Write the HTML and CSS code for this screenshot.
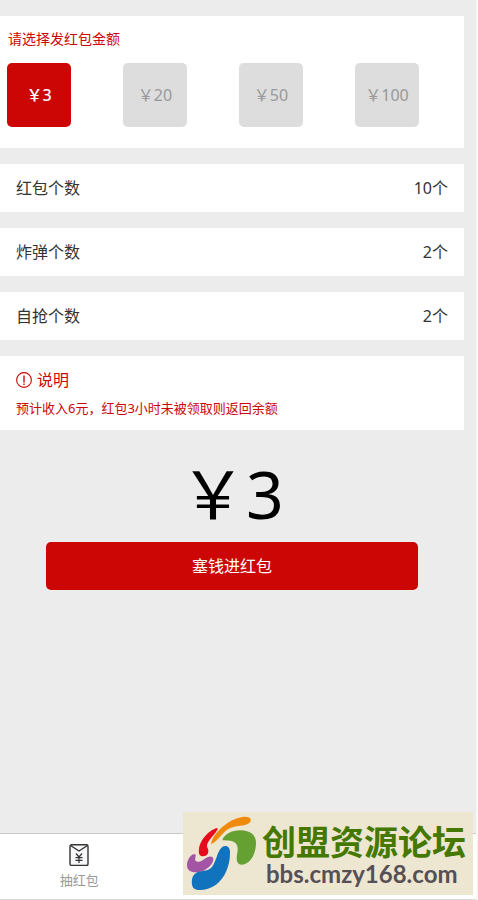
FILE: index.html
```html
<!DOCTYPE html>
<html lang="zh-CN">

<head>
    <meta charset="utf-8">
    <title>发红包</title>
    <meta name="viewport" content="width=device-width, initial-scale=1">
    <link rel="stylesheet" href="styles.css">
</head>

<body>

  <main class="content">
    <section class="card amount">
      <h1 class="amount-title">请选择发红包金额</h1>
      <div class="amount-list">
        <button type="button" class="amount-item active">￥3</button>
        <button type="button" class="amount-item">￥20</button>
        <button type="button" class="amount-item">￥50</button>
        <button type="button" class="amount-item">￥100</button>
      </div>
    </section>

    <div class="card row"><span>红包个数</span><span>10个</span></div>
    <div class="card row"><span>炸弹个数</span><span>2个</span></div>
    <div class="card row"><span>自抢个数</span><span>2个</span></div>

    <section class="card notice">
      <h2 class="notice-title">
        <svg class="notice-icon" viewBox="0 0 16 16" fill="none" stroke="currentColor">
          <circle cx="8" cy="8" r="7.4" stroke-width="1.1"/>
          <path d="M8 3.500v7M8 11.500v1.500" stroke-width="1.4"/>
        </svg>
        说明
      </h2>
      <p class="notice-text">预计收入6元，红包3小时未被领取则返回余额</p>
    </section>

    <div class="total">￥3</div>
    <button type="button" class="submit">塞钱进红包</button>
  </main>

  <nav class="tabbar">
    <a class="tab" href="#">
      <svg class="tab-icon" viewBox="0 0 20 22" fill="none" stroke="#333" stroke-width="1.4">
        <rect x="1" y="0.8" width="18" height="20.6" rx="1.5" fill="#f8f8fa"/>
        <path d="M1.500 1.500L10 7l8.500-5.500" stroke-linejoin="round"/>
        <path d="M7 9.500l3 3.500 3-3.500M10 13v6M6.500 13.700h7M6.500 16.300h7" stroke-width="1.2"/>
      </svg>
      <span>抽红包</span>
    </a>
  </nav>

  <!-- forum banner over the tab bar -->
  <div class="banner">
    <svg class="banner-logo" viewBox="0 0 228 249">
      <path fill="#e60b1c" d="M103 48C80 52 50 84 48 112c-2 14 2 21 12 21 12 0 17-9 16-18-1-6-5-9-4-15 3-16 24-32 32-48z"/>
      <path fill="#ef8a0c" d="M85 96C84 74 124 32 162 19c20-7 36-6 40 1 4 8-3 15-14 18-14 4-28 2-46 10-24 10-36 40-57 48z"/>
      <path fill="#65a033" d="M118 85c5-18 28-30 54-30 30 0 49 14 47 42-2 34-20 61-43 61-20-1-15-26-12-42 2-24-12-32-46-31z"/>
      <path fill="#a454a4" d="M32 127c-12 3-20 20-20 33 0 14 10 21 25 21 24 0 51-18 54-38 1-10-9-12-18-7-10 5-18 15-29 13-13-2-5-12-6-20 0-2-3-3-6-2z"/>
      <path fill="#1172bd" d="M127 102c-12 0-19 14-25 30-8 22-14 38-28 42-16 5-30 2-41 14-9 10-9 36 1 42 12 8 44 3 65-12 26-18 43-58 42-97 0-12-5-19-14-19z"/>
    </svg>
    <div class="banner-text">
      <div class="banner-name">创盟资源论坛</div>
      <div class="banner-url">bbs.cmzy168.com</div>
    </div>
  </div>

</body>

</html>
```
FILE: styles.css
```css
* {
  box-sizing: border-box;
}

body {
  margin: 0;
  min-height: 100vh;
  display: flex;
  flex-direction: column;
  background-color: #ececec;
  border-right: 2px solid #f7f7f7;
  font-family: "Noto Sans", "Noto Sans CJK SC", sans-serif;
  font-size: 16px;
  line-height: 24px;
  color: #333;
}

h1, h2, p {
  margin: 0;
  font-weight: 400;
}

button {
  border: none;
  border-radius: 5px;
  padding: 0;
  font: inherit;
  cursor: pointer;
}

.content {
  flex: 1;
  display: flex;
  flex-direction: column;
  gap: 16px;
  padding: 16px 12px 0 0;
}

.card {
  background-color: #fff;
}

.amount {
  padding: 11px 0 21px;
}

.amount-title {
  padding-left: 8px;
  margin-bottom: 12px;
  font-size: 14px;
  color: #cc0605;
}

.amount-list {
  display: grid;
  grid-template-columns: repeat(4, 1fr);
  padding-left: 7px;
  margin-right: -7px;
}

.amount-item {
  width: 64px;
  height: 64px;
  background-color: #ddd;
  color: #999;
}

.amount-item.active {
  background-color: #cc0605;
  color: #fff;
  font-weight: 500;
}

.row {
  display: flex;
  justify-content: space-between;
  padding: 12px 16px;
}

.notice {
  padding: 12px 16px;
  color: #cc0605;
}

.notice-title {
  display: flex;
  align-items: center;
  gap: 5px;
  font-size: 16px;
}

.notice-icon {
  width: 16px;
  height: 16px;
}

.notice-text {
  margin-top: 6px;
  font-size: 13px;
  line-height: 20px;
}

.total {
  padding-top: 14px;
  font-size: 66px;
  line-height: 66px;
  text-align: center;
  color: #000;
}

.submit {
  width: 80%;
  height: 48px;
  align-self: center;
  background-color: #cc0605;
  color: #fff;
}

.tabbar {
  display: flex;
  height: 67px;
  border-top: 1px solid #c8c8c8;
  border-bottom: 1px solid #d8d8d8;
  background-color: #fff;
}

.tab {
  width: 33.33%;
  display: flex;
  flex-direction: column;
  align-items: center;
  gap: 4px;
  padding-top: 10px;
  font-size: 13px;
  line-height: 20px;
  color: #999;
  text-decoration: none;
}

.tab-icon {
  width: 20px;
  height: 22px;
}

.banner {
  position: fixed;
  right: 5px;
  bottom: 5px;
  width: 290px;
  height: 83px;
  display: flex;
  gap: 3px;
  background-color: #ede6d1;
}

.banner-logo {
  width: 76px;
  height: 83px;
}

.banner-text {
  padding-top: 12px;
  white-space: nowrap;
}

.banner-name {
  font-family: "Noto Sans CJK SC", sans-serif;
  font-size: 34px;
  line-height: 34px;
  font-weight: 700;
  color: #447800;
}

.banner-url {
  padding: 4px 0 0 4px;
  font-family: Lato, sans-serif;
  font-size: 24px;
  line-height: 24px;
  font-weight: 700;
  color: #555056;
}
```
